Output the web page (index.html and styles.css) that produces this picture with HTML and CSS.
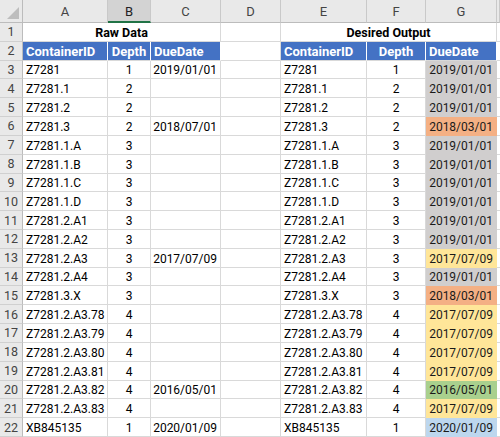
FILE: index.html
```html
<!DOCTYPE html>
<html>
<head>
<meta charset="utf-8">
<link rel="stylesheet" href="styles.css">
</head>
<body>
<div class="sheet">
  <div class="row colhead">
    <div class="corner"><span class="tri"></span></div>
    <div class="ch">A</div><div class="ch sel">B</div><div class="ch">C</div><div class="ch">D</div><div class="ch">E</div><div class="ch">F</div><div class="ch">G</div><div class="ch"></div>
  </div>
  <div class="row">
    <div class="rh">1</div>
    <div class="c title span3">Raw Data</div><div class="c"></div>
    <div class="c title span3">Desired Output</div><div class="c"></div>
  </div>
  <div class="row">
    <div class="rh">2</div>
    <div class="c hd">ContainerID</div><div class="c hd ctr">Depth</div><div class="c hd">DueDate</div><div class="c"></div>
    <div class="c hd">ContainerID</div><div class="c hd ctr">Depth</div><div class="c hd">DueDate</div><div class="c"></div>
  </div>
  <div class="row"><div class="rh">3</div><div class="c">Z7281</div><div class="c ctr">1</div><div class="c num">2019/01/01</div><div class="c"></div><div class="c">Z7281</div><div class="c ctr">1</div><div class="c num grey">2019/01/01</div><div class="c"></div></div>
  <div class="row"><div class="rh">4</div><div class="c">Z7281.1</div><div class="c ctr">2</div><div class="c num"></div><div class="c"></div><div class="c">Z7281.1</div><div class="c ctr">2</div><div class="c num grey">2019/01/01</div><div class="c"></div></div>
  <div class="row"><div class="rh">5</div><div class="c">Z7281.2</div><div class="c ctr">2</div><div class="c num"></div><div class="c"></div><div class="c">Z7281.2</div><div class="c ctr">2</div><div class="c num grey">2019/01/01</div><div class="c"></div></div>
  <div class="row"><div class="rh">6</div><div class="c">Z7281.3</div><div class="c ctr">2</div><div class="c num">2018/07/01</div><div class="c"></div><div class="c">Z7281.3</div><div class="c ctr">2</div><div class="c num orange">2018/03/01</div><div class="c"></div></div>
  <div class="row"><div class="rh">7</div><div class="c">Z7281.1.A</div><div class="c ctr">3</div><div class="c num"></div><div class="c"></div><div class="c">Z7281.1.A</div><div class="c ctr">3</div><div class="c num grey">2019/01/01</div><div class="c"></div></div>
  <div class="row"><div class="rh">8</div><div class="c">Z7281.1.B</div><div class="c ctr">3</div><div class="c num"></div><div class="c"></div><div class="c">Z7281.1.B</div><div class="c ctr">3</div><div class="c num grey">2019/01/01</div><div class="c"></div></div>
  <div class="row"><div class="rh">9</div><div class="c">Z7281.1.C</div><div class="c ctr">3</div><div class="c num"></div><div class="c"></div><div class="c">Z7281.1.C</div><div class="c ctr">3</div><div class="c num grey">2019/01/01</div><div class="c"></div></div>
  <div class="row"><div class="rh">10</div><div class="c">Z7281.1.D</div><div class="c ctr">3</div><div class="c num"></div><div class="c"></div><div class="c">Z7281.1.D</div><div class="c ctr">3</div><div class="c num grey">2019/01/01</div><div class="c"></div></div>
  <div class="row"><div class="rh">11</div><div class="c">Z7281.2.A1</div><div class="c ctr">3</div><div class="c num"></div><div class="c"></div><div class="c">Z7281.2.A1</div><div class="c ctr">3</div><div class="c num grey">2019/01/01</div><div class="c"></div></div>
  <div class="row"><div class="rh">12</div><div class="c">Z7281.2.A2</div><div class="c ctr">3</div><div class="c num"></div><div class="c"></div><div class="c">Z7281.2.A2</div><div class="c ctr">3</div><div class="c num grey">2019/01/01</div><div class="c"></div></div>
  <div class="row"><div class="rh">13</div><div class="c">Z7281.2.A3</div><div class="c ctr">3</div><div class="c num">2017/07/09</div><div class="c"></div><div class="c">Z7281.2.A3</div><div class="c ctr">3</div><div class="c num yellow">2017/07/09</div><div class="c"></div></div>
  <div class="row"><div class="rh">14</div><div class="c">Z7281.2.A4</div><div class="c ctr">3</div><div class="c num"></div><div class="c"></div><div class="c">Z7281.2.A4</div><div class="c ctr">3</div><div class="c num grey">2019/01/01</div><div class="c"></div></div>
  <div class="row"><div class="rh">15</div><div class="c">Z7281.3.X</div><div class="c ctr">3</div><div class="c num"></div><div class="c"></div><div class="c">Z7281.3.X</div><div class="c ctr">3</div><div class="c num orange">2018/03/01</div><div class="c"></div></div>
  <div class="row"><div class="rh">16</div><div class="c">Z7281.2.A3.78</div><div class="c ctr">4</div><div class="c num"></div><div class="c"></div><div class="c">Z7281.2.A3.78</div><div class="c ctr">4</div><div class="c num yellow">2017/07/09</div><div class="c"></div></div>
  <div class="row"><div class="rh">17</div><div class="c">Z7281.2.A3.79</div><div class="c ctr">4</div><div class="c num"></div><div class="c"></div><div class="c">Z7281.2.A3.79</div><div class="c ctr">4</div><div class="c num yellow">2017/07/09</div><div class="c"></div></div>
  <div class="row"><div class="rh">18</div><div class="c">Z7281.2.A3.80</div><div class="c ctr">4</div><div class="c num"></div><div class="c"></div><div class="c">Z7281.2.A3.80</div><div class="c ctr">4</div><div class="c num yellow">2017/07/09</div><div class="c"></div></div>
  <div class="row"><div class="rh">19</div><div class="c">Z7281.2.A3.81</div><div class="c ctr">4</div><div class="c num"></div><div class="c"></div><div class="c">Z7281.2.A3.81</div><div class="c ctr">4</div><div class="c num yellow">2017/07/09</div><div class="c"></div></div>
  <div class="row"><div class="rh">20</div><div class="c">Z7281.2.A3.82</div><div class="c ctr">4</div><div class="c num">2016/05/01</div><div class="c"></div><div class="c">Z7281.2.A3.82</div><div class="c ctr">4</div><div class="c num green">2016/05/01</div><div class="c"></div></div>
  <div class="row"><div class="rh">21</div><div class="c">Z7281.2.A3.83</div><div class="c ctr">4</div><div class="c num"></div><div class="c"></div><div class="c">Z7281.2.A3.83</div><div class="c ctr">4</div><div class="c num yellow">2017/07/09</div><div class="c"></div></div>
  <div class="row"><div class="rh">22</div><div class="c">XB845135</div><div class="c ctr">1</div><div class="c num">2020/01/09</div><div class="c"></div><div class="c">XB845135</div><div class="c ctr">1</div><div class="c num blue">2020/01/09</div><div class="c"></div></div>
</div>
</body>
</html>
```

FILE: styles.css
```css
* { box-sizing: border-box; }
html, body { margin: 0; padding: 0; background: #fff; }
body { font-family: Roboto, "Liberation Sans", sans-serif; }

.sheet {
  width: 500px;
  height: 437px;
  display: grid;
  grid-template-rows: 23px repeat(22, 1fr);
  overflow: hidden;
}

.row {
  display: grid;
  grid-template-columns: 23px 85px 43px 70px 60px 86px 59px 71px 3px;
  min-height: 0;
}

.corner {
  background: #e9e9e9;
  border-right: 1px solid #bcbcbc;
  border-bottom: 1px solid #bcbcbc;
  position: relative;
}
.tri {
  position: absolute;
  right: 3px;
  bottom: 3px;
  width: 0;
  height: 0;
  border-left: 12px solid transparent;
  border-bottom: 12px solid #bdbdbd;
}

.ch {
  background: #e9e9e9;
  border-right: 1px solid #c9c9c9;
  border-bottom: 1px solid #bcbcbc;
  color: #444;
  font-size: 13px;
  display: flex;
  align-items: center;
  justify-content: center;
  padding-top: 1px;
}
.ch.sel {
  background: #d3d3d3;
  color: #222;
  border-bottom: 2px solid #217346;
}

.rh {
  background: #e9e9e9;
  border-right: 1px solid #bcbcbc;
  border-bottom: 1px solid #d0d0d0;
  color: #444;
  font-size: 12.5px;
  display: flex;
  align-items: center;
  justify-content: center;
}

.c {
  border-right: 1px solid #d9d9d9;
  border-bottom: 1px solid #d9d9d9;
  font-size: 12px;
  line-height: 14px;
  color: #000;
  display: flex;
  align-items: flex-end;
  padding: 0 3px 1px;
  white-space: nowrap;
  min-height: 0;
}
.c.span3 { grid-column: span 3; }
.c.title { justify-content: center; font-weight: 700; font-size: 12.5px; }
.c.ctr { justify-content: center; }
.c.num { justify-content: flex-end; }

.c.hd {
  background: #4472c4;
  color: #fff;
  font-weight: 700;
  font-size: 13px;
  border-right-color: #ffffff;
}
.c.hd.ctr { justify-content: center; }

.c.grey, .c.orange, .c.yellow, .c.green, .c.blue {
  border-color: transparent;
  color: #1a1a1a;
}
.c.grey { background: #d0cece; }
.c.orange { background: #f4b084; }
.c.yellow { background: #ffe699; }
.c.green { background: #a9d08e; }
.c.blue { background: #bdd7ee; }
```
